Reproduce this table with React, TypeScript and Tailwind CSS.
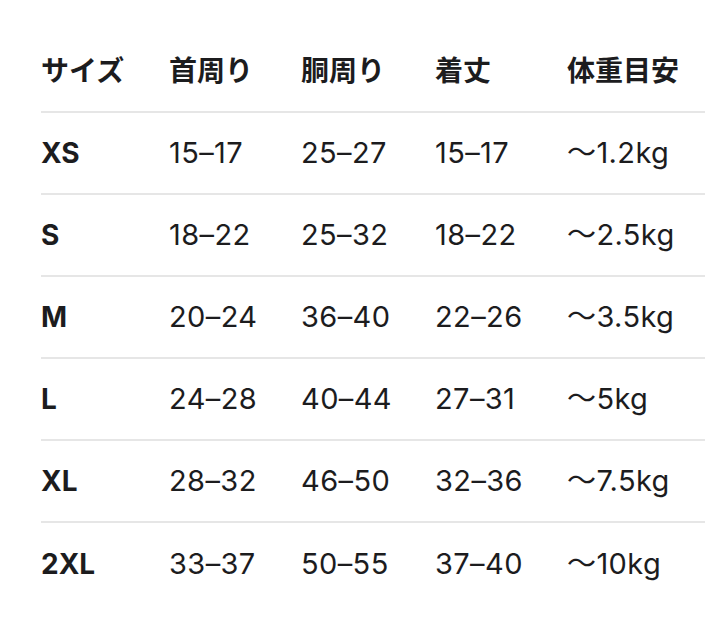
import React from 'react';

const rows = [
    { size: 'XS', neck: '15–17', waist: '25–27', length: '15–17', weight: '～1.2kg' },
    { size: 'S', neck: '18–22', waist: '25–32', length: '18–22', weight: '～2.5kg' },
    { size: 'M', neck: '20–24', waist: '36–40', length: '22–26', weight: '～3.5kg' },
    { size: 'L', neck: '24–28', waist: '40–44', length: '27–31', weight: '～5kg' },
    { size: 'XL', neck: '28–32', waist: '46–50', length: '32–36', weight: '～7.5kg' },
    { size: '2XL', neck: '33–37', waist: '50–55', length: '37–40', weight: '～10kg' },
];

const cols = 'grid grid-cols-[128px_132px_134px_132px_138px] items-center';

const App: React.FC = () => {
    return (
        <div
            className="w-[721px] h-[620px] bg-white text-[#1c1c1e] pt-[31px] pl-[41px]"
            style={{ fontFamily: 'Inter, "Noto Sans CJK JP", sans-serif' }}
        >
            <div className="w-[664px]">
                <div className={`${cols} h-[82px] border-b-2 border-[#e6e6e6] text-[28px] font-bold`}>
                    <div>サイズ</div>
                    <div>首周り</div>
                    <div>胴周り</div>
                    <div>着丈</div>
                    <div>体重目安</div>
                </div>
                {rows.map((r, index) => (
                    <div
                        key={index}
                        className={`${cols} h-[82px] text-[29px] tracking-[0.4px] ${index < rows.length - 1 ? 'border-b-2 border-[#e6e6e6]' : ''}`}
                    >
                        <div className="font-bold tracking-normal text-[28px]">{r.size}</div>
                        <div>{r.neck}</div>
                        <div>{r.waist}</div>
                        <div>{r.length}</div>
                        <div>{r.weight}</div>
                    </div>
                ))}
            </div>
        </div>
    );
};

export default App;
